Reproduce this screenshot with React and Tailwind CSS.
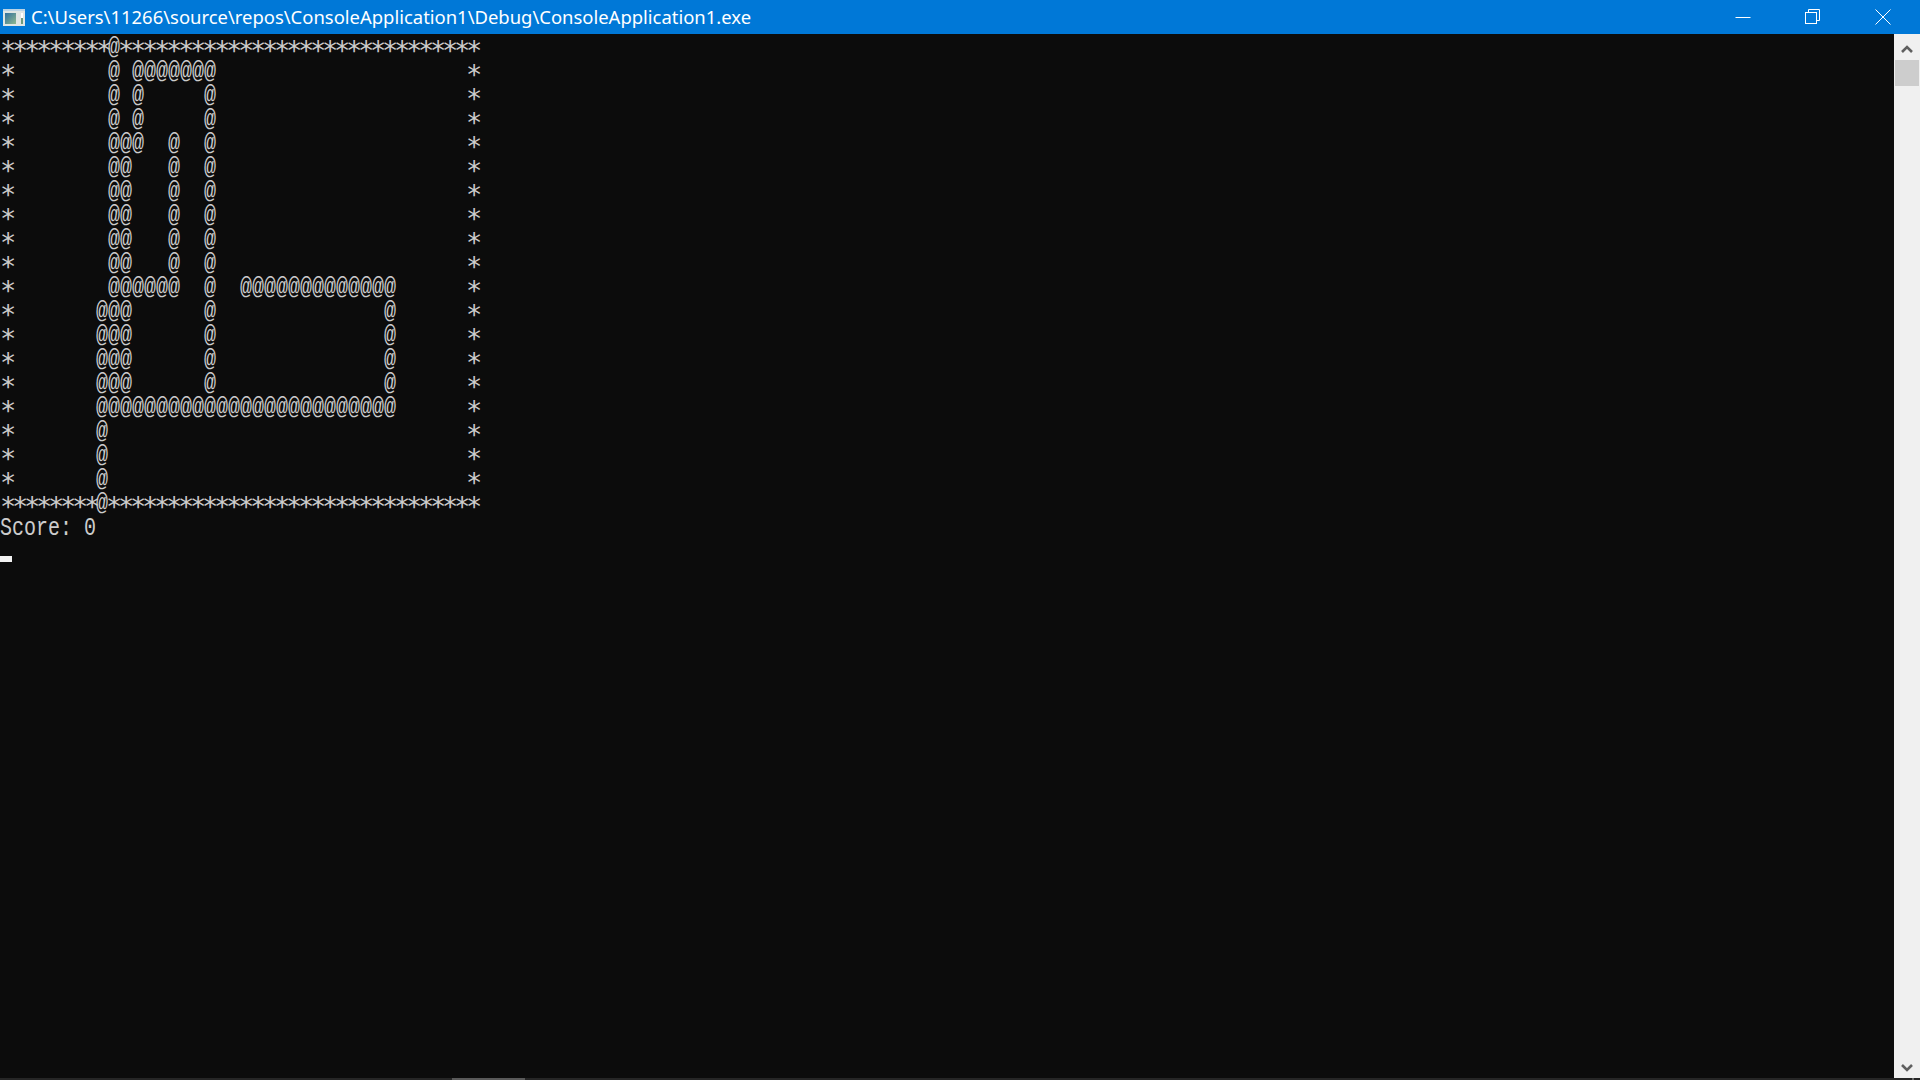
const BOARD = [
  "*********@******************************",
  "*        @ @@@@@@@                     *",
  "*        @ @     @                     *",
  "*        @ @     @                     *",
  "*        @@@  @  @                     *",
  "*        @@   @  @                     *",
  "*        @@   @  @                     *",
  "*        @@   @  @                     *",
  "*        @@   @  @                     *",
  "*        @@   @  @                     *",
  "*        @@@@@@  @  @@@@@@@@@@@@@      *",
  "*       @@@      @              @      *",
  "*       @@@      @              @      *",
  "*       @@@      @              @      *",
  "*       @@@      @              @      *",
  "*       @@@@@@@@@@@@@@@@@@@@@@@@@      *",
  "*       @                              *",
  "*       @                              *",
  "*       @                              *",
  "********@*******************************",
];

function ConsoleIcon() {
  return (
    <svg width="22" height="17" viewBox="0 0 22 17" className="shrink-0">
      <defs>
        <linearGradient id="pane" x1="0" y1="0" x2="1" y2="1">
          <stop offset="0" stopColor="#2f6f9f" />
          <stop offset="1" stopColor="#8fb98f" />
        </linearGradient>
      </defs>
      <rect width="22" height="17" fill="#dfe6e4" />
      <rect x="0" y="0" width="22" height="2" fill="#b9d3e6" />
      <rect x="2" y="4" width="11" height="11" fill="url(#pane)" />
      <rect x="18" y="4" width="2" height="5" fill="#ffffff" />
      <rect x="18" y="9" width="2" height="6" fill="#6f9a7c" />
    </svg>
  );
}

function TitleBar() {
  return (
    <div className="flex h-[34px] shrink-0 items-center bg-[#0078d7] pr-[2px] text-white">
      <div className="ml-[3px] flex min-w-0 flex-1 items-center gap-[6px]">
        <ConsoleIcon />
        <span className="font-['Noto_Sans'] text-[18.45px] leading-[34px] whitespace-nowrap">
          C:\Users\11266\source\repos\ConsoleApplication1\Debug\ConsoleApplication1.exe
        </span>
      </div>
      <button className="flex h-[34px] w-[70px] items-center justify-center">
        <svg width="16" height="16" viewBox="0 0 16 16" fill="none" stroke="white" strokeWidth="1">
          <path d="M0.5 8.5H15.5" />
        </svg>
      </button>
      <button className="flex h-[34px] w-[70px] items-center justify-center">
        <svg width="16" height="16" viewBox="0 0 16 16" fill="none" stroke="white" strokeWidth="1">
          <rect x="0.5" y="3.5" width="11" height="11" />
          <path d="M3.5 3.5V0.5H14.5V11.5H11.5" />
        </svg>
      </button>
      <button className="flex h-[34px] w-[70px] items-center justify-center">
        <svg width="16" height="16" viewBox="0 0 16 16" fill="none" stroke="white" strokeWidth="1">
          <path d="M0.5 0.5L15.5 15.5M15.5 0.5L0.5 15.5" />
        </svg>
      </button>
    </div>
  );
}

function ScrollBar() {
  return (
    <div className="flex w-[26px] shrink-0 flex-col bg-[#f0f0f0]">
      <div className="flex h-[26px] items-center justify-center pt-[3px]">
        <svg width="12" height="10" viewBox="0 0 12 10" fill="none" stroke="#606060" strokeWidth="2.6">
          <path d="M1 8L6 3L11 8" />
        </svg>
      </div>
      <div className="mx-px h-[26px] bg-[#cdcdcd]" />
      <div className="flex-1" />
      <div className="flex h-[26px] items-center justify-center pt-[5px]">
        <svg width="12" height="10" viewBox="0 0 12 10" fill="none" stroke="#606060" strokeWidth="2.6">
          <path d="M1 2L6 7L11 2" />
        </svg>
      </div>
    </div>
  );
}

// stars get their own font size, with tracking to hold them on the 12px cell
function ConsoleRow({ text }) {
  const runs = text.match(/\*+|[^*]+/g);
  return (
    <div className="flex h-[24px] items-start whitespace-pre">
      {runs.map((run, i) =>
        run[0] === "*" ? (
          <span
            key={i}
            className={
              i === 0
                ? "mt-[10px] h-[14px] font-['DejaVu_Sans_Mono',monospace] text-[27px] leading-[14px] tracking-[-4.254px]"
                : "mt-[10px] h-[14px] -translate-x-[2px] font-['DejaVu_Sans_Mono',monospace] text-[27px] leading-[14px] tracking-[-4.254px]"
            }
          >
            {run}
          </span>
        ) : (
          <span key={i} className="mt-[6px] h-[16px] scale-y-[1.2] leading-[16px]">
            {run}
          </span>
        )
      )}
    </div>
  );
}

export default function App() {
  return (
    <div className="flex h-[1080px] w-[1920px] flex-col overflow-hidden bg-[#0c0c0c]">
      <TitleBar />
      <div className="flex min-h-0 flex-1">
        <div className="min-w-0 flex-1 font-['Liberation_Mono',monospace] text-[20px] leading-[24px] text-[#cccccc]">
          {BOARD.map((row, i) => (
            <ConsoleRow key={i} text={row} />
          ))}
          <div className="h-[24px] whitespace-pre">
            <span className="inline-block translate-y-[3px] scale-y-[1.25] leading-[16px]">
              Score: 0
            </span>
          </div>
          <div className="flex h-[24px] items-end">
            <div className="h-[6px] w-[12px] bg-[#f2f2f2]" />
          </div>
        </div>
        <ScrollBar />
      </div>
      <div className="flex h-[2px] shrink-0 bg-[#262626]">
        <div className="ml-[452px] h-full w-[73px] bg-[#5a5a5a]" />
        <div className="ml-auto mr-[6px] h-full w-[2px] bg-[#6a6a6a]" />
      </div>
    </div>
  );
}
